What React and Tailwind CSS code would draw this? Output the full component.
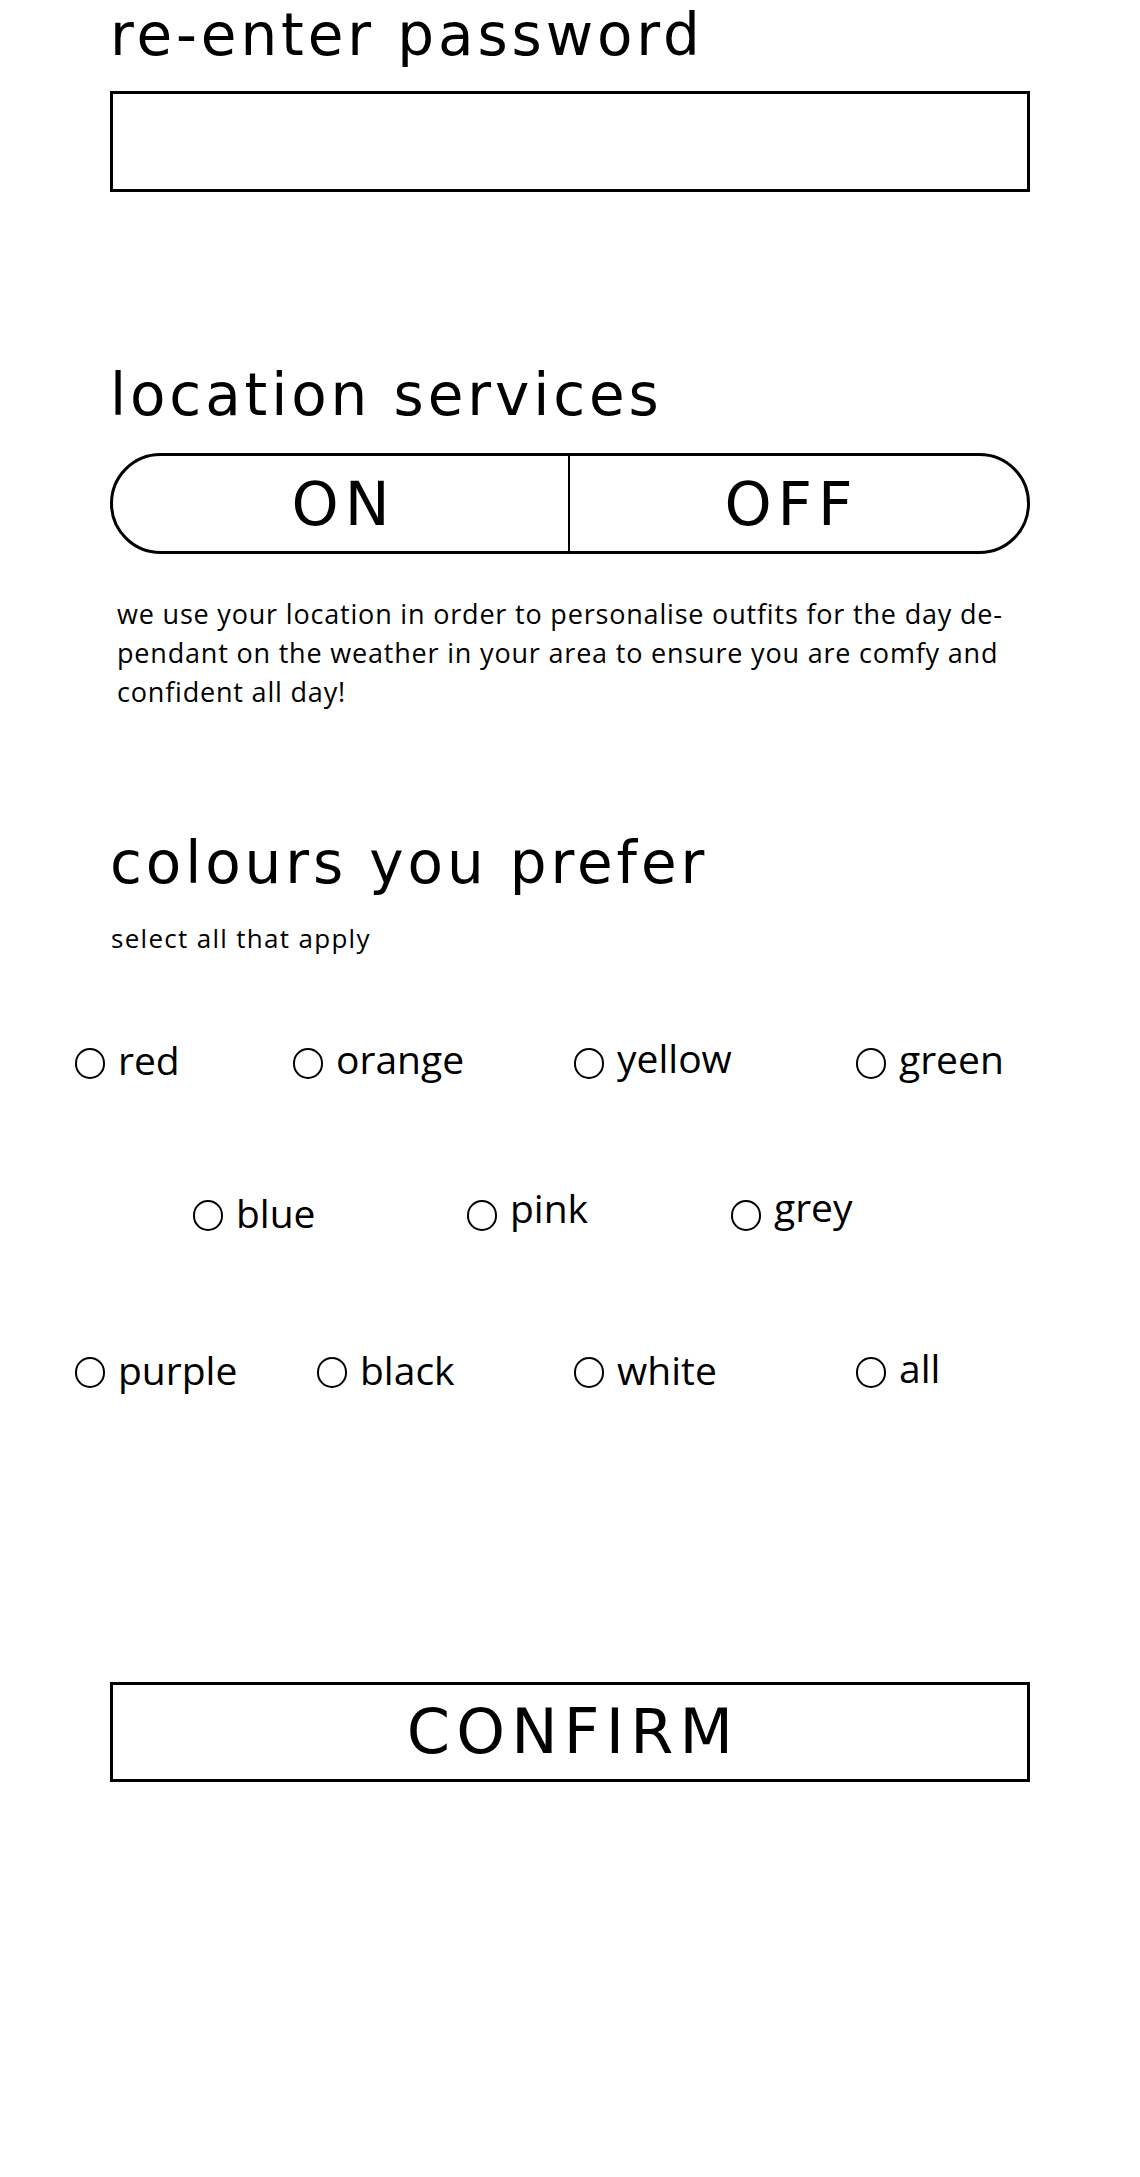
import React, { useState } from "react";

const colourRows = [
  {
    pad: "pl-[75px]",
    items: [
      { label: "red", w: "w-[218px]", lift: "mb-[6px]" },
      { label: "orange", w: "w-[281px]", lift: "mb-[8px]" },
      { label: "yellow", w: "w-[282px]", lift: "mb-[10px]" },
      { label: "green", w: "w-[200px]", lift: "mb-[8px]" },
    ],
  },
  {
    pad: "pl-[193px]",
    items: [
      { label: "blue", w: "w-[274px]", lift: "mb-[4px]" },
      { label: "pink", w: "w-[264px]", lift: "mb-[14px]" },
      { label: "grey", w: "w-[200px]", lift: "mb-[16px]" },
    ],
  },
  {
    pad: "pl-[75px]",
    items: [
      { label: "purple", w: "w-[242px]", lift: "mb-[4px]" },
      { label: "black", w: "w-[257px]", lift: "mb-[4px]" },
      { label: "white", w: "w-[282px]", lift: "mb-[4px]" },
      { label: "all", w: "w-[200px]", lift: "mb-[8px]" },
    ],
  },
];

const Heading = ({ children, className = "" }) => (
  <h2
    className={`font-['DejaVu_Sans',sans-serif] text-[58px] leading-[58px] font-normal tracking-[0.067em] text-black ${className}`}
  >
    {children}
  </h2>
);

const ColourOption = ({ label, w, lift, checked, onToggle }) => (
  <button
    type="button"
    onClick={onToggle}
    className={`flex items-center gap-[13px] h-[40px] ${w}`}
  >
    <span
      className={`shrink-0 w-[30px] h-[31px] rounded-full border-[2.5px] border-black ${
        checked ? "bg-black" : "bg-white"
      }`}
    />
    <span
      className={`font-['Open_Sans',sans-serif] text-[39px] leading-[40px] text-black whitespace-nowrap ${lift}`}
    >
      {label}
    </span>
  </button>
);

export default function App() {
  const [location, setLocation] = useState(null);
  const [picked, setPicked] = useState([]);

  const toggleColour = (label) =>
    setPicked((prev) =>
      prev.includes(label) ? prev.filter((c) => c !== label) : [...prev, label]
    );

  return (
    <div className="min-h-[2177px] w-full bg-white text-black">
      <div className="px-[110px] pt-[6px]">
        <Heading>re-enter password</Heading>
        <input
          type="password"
          className="mt-[27px] block w-full h-[101px] border-[3px] border-black bg-white outline-none px-4 text-[32px]"
        />

        <Heading className="mt-[174px]">location services</Heading>
        <div className="mt-[29px] grid grid-cols-2 h-[101px] rounded-full border-[3px] border-black overflow-hidden">
          <button
            type="button"
            onClick={() => setLocation("on")}
            className={`flex items-center justify-center border-r-[2px] border-black font-['DejaVu_Sans',sans-serif] text-[60px] leading-none tracking-[0.1em] pl-[6px] ${
              location === "on" ? "bg-gray-100" : ""
            }`}
          >
            ON
          </button>
          <button
            type="button"
            onClick={() => setLocation("off")}
            className={`flex items-center justify-center font-['DejaVu_Sans',sans-serif] text-[60px] leading-none tracking-[0.1em] pr-[14px] ${
              location === "off" ? "bg-gray-100" : ""
            }`}
          >
            OFF
          </button>
        </div>

        <p className="mt-[40px] pl-[7px] font-['Open_Sans',sans-serif] text-[27px] leading-[39px] tracking-[0.03em]">
          we use your location in order to personalise outfits for the day de-
          <br />
          pendant on the weather in your area to ensure you are comfy and
          <br />
          confident all day!
        </p>

        <Heading className="mt-[123px]">colours you prefer</Heading>
        <p className="mt-[31px] pl-[1px] font-['Open_Sans',sans-serif] text-[26px] leading-[30px] tracking-[0.05em]">
          select all that apply
        </p>
      </div>

      <div className="flex flex-col">
        {colourRows.map((row, i) => (
          <div
            key={i}
            className={`flex ${row.pad} ${
              i === 0 ? "mt-[90px]" : i === 1 ? "mt-[112px]" : "mt-[117px]"
            }`}
          >
            {row.items.map((item) => (
              <ColourOption
                key={item.label}
                {...item}
                checked={picked.includes(item.label)}
                onToggle={() => toggleColour(item.label)}
              />
            ))}
          </div>
        ))}
      </div>

      <div className="px-[110px] mt-[290px]">
        <button
          type="button"
          className="flex items-center justify-center w-full h-[100px] border-[3px] border-black font-['DejaVu_Sans',sans-serif] text-[62px] leading-none tracking-[0.1em] pl-[6px]"
        >
          CONFIRM
        </button>
      </div>
    </div>
  );
}
